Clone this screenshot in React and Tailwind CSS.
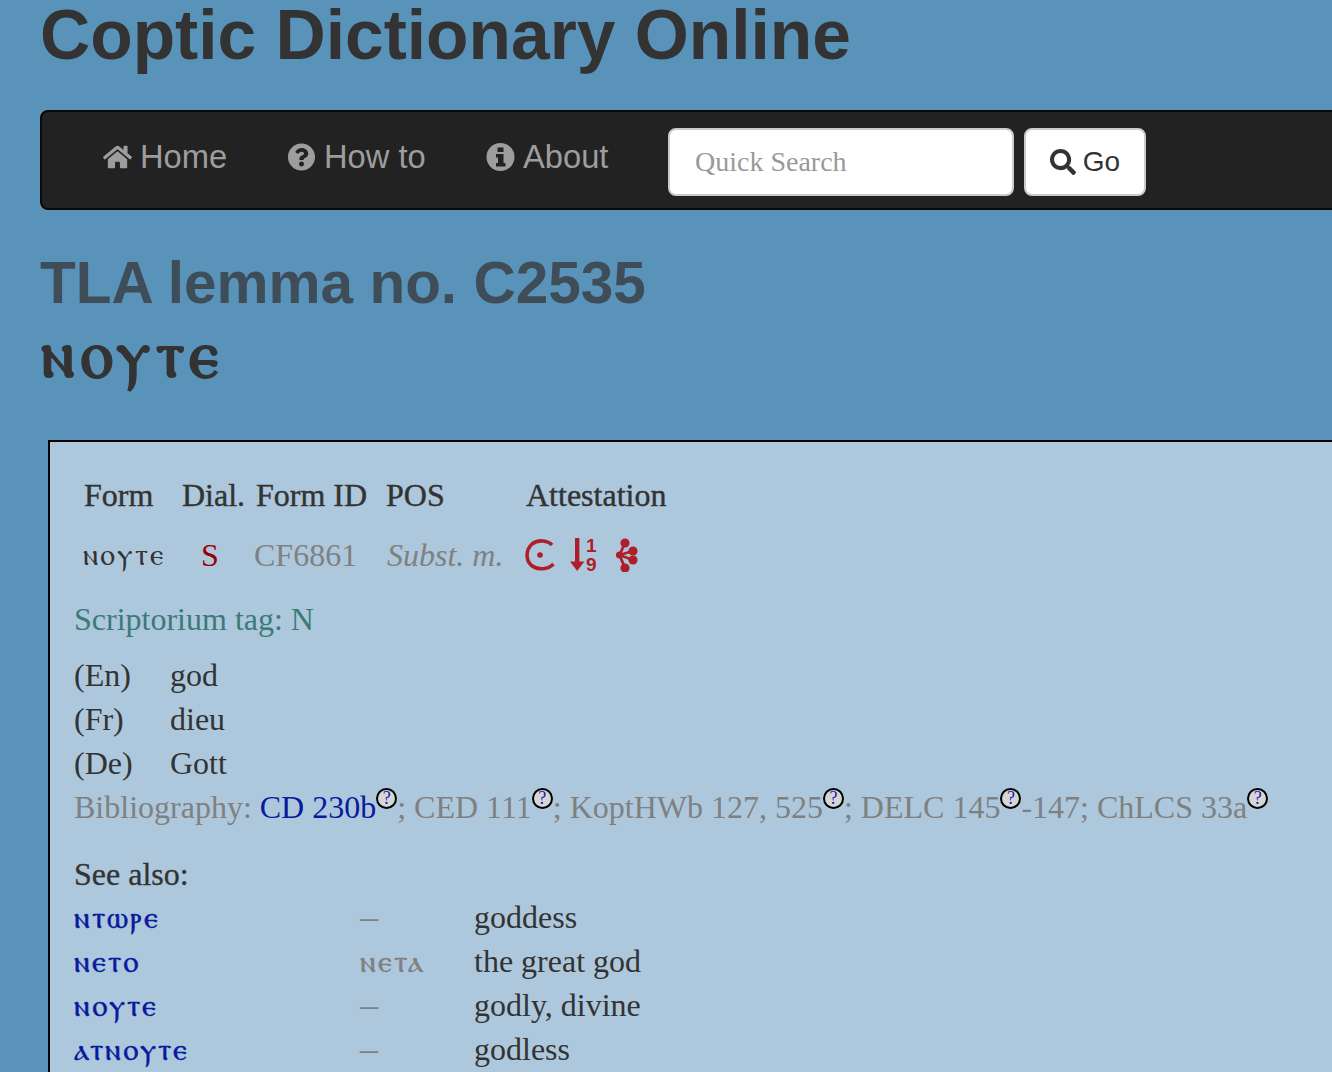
import React from "react";
import { FaHome, FaQuestionCircle, FaSearch } from "react-icons/fa";

const coptic = "font-['DejaVu_Sans','Noto_Sans',sans-serif]";

const Help = () => (
  <span className="relative top-[-14px] inline-flex h-[21px] w-[21px] items-center justify-center rounded-full border-2 border-black bg-[#d6d6d6] align-baseline text-[18px] leading-none text-[#1a1ab4]">
    ?
  </span>
);

const InfoIcon = ({ className }) => (
  <svg viewBox="0 0 28 28" className={className}>
    <circle cx="14" cy="14" r="14" fill="currentColor" />
    <rect x="11" y="4.5" width="6" height="4.5" fill="#222" />
    <path d="M9.5 11h7.5v9h2v3.5H9.5V20h2v-5.5h-2z" fill="#222" />
  </svg>
);

const NavItem = ({ icon: Icon, label, className }) => (
  <a className={`mb-[6px] flex items-center gap-[8px] text-[#9d9d9d] ${className}`}>
    <Icon className="h-[28px] w-[29px]" />
    <span>{label}</span>
  </a>
);

const MoonIcon = () => (
  <svg viewBox="0 0 32 34" className="h-[34px] w-[32px]" fill="none" stroke="#ae1f2b" strokeWidth="3.6">
    <path d="M28 7C24 2.5 14 1 8 6 1.5 12 1.5 22 7.5 27.5c6.5 5 16.5 4 22-1.5" />
    <circle cx="16" cy="17" r="2.8" fill="#ae1f2b" stroke="none" />
  </svg>
);

const ArrowIcon = () => (
  <svg viewBox="0 0 30 36" className="h-[36px] w-[30px] overflow-visible" fill="#ae1f2b">
    <rect x="5" y="1" width="4.4" height="27" />
    <path d="M0 24.5h14.4L7.2 34z" />
    <text x="16" y="15" fontSize="19" fontWeight="700" fontFamily="Liberation Sans, sans-serif">1</text>
    <text x="16" y="34" fontSize="19" fontWeight="700" fontFamily="Liberation Sans, sans-serif">9</text>
  </svg>
);

const BranchIcon = () => (
  <svg viewBox="0 0 24 34" className="ml-[2px] h-[34px] w-[24px]" fill="#ae1f2b" stroke="#ae1f2b">
    <circle cx="9" cy="5" r="4.6" stroke="none" />
    <circle cx="17" cy="13" r="4.6" stroke="none" />
    <circle cx="17" cy="22" r="4.6" stroke="none" />
    <circle cx="9" cy="30" r="4.6" stroke="none" />
    <circle cx="3.5" cy="17" r="3.6" stroke="none" />
    <path d="M3.5 17 9 5M3.5 17 17 13M3.5 17 17 22M3.5 17 9 30" strokeWidth="2.8" fill="none" />
  </svg>
);

const seeAlso = [
  ["ⲛⲧⲱⲣⲉ", "–", "goddess"],
  ["ⲛⲉⲧⲟ", "ⲛⲉⲧⲁ", "the great god"],
  ["ⲛⲟⲩⲧⲉ", "–", "godly, divine"],
  ["ⲁⲧⲛⲟⲩⲧⲉ", "–", "godless"],
];

const glosses = [
  ["(En)", "god"],
  ["(Fr)", "dieu"],
  ["(De)", "Gott"],
];

export default function App() {
  return (
    <div className="h-[1072px] overflow-hidden bg-[#5a93b9] pl-10 font-['Liberation_Sans',Arial,sans-serif]">
      <h1 className="h-[110px] whitespace-nowrap text-[69.5px] font-bold leading-[70px] text-[#333]">
        Coptic Dictionary Online
      </h1>

      <nav className="flex h-[100px] w-[1400px] items-center rounded-lg border-2 border-[#080808] bg-[#222] pl-[61px] text-[32.7px] leading-none">
        <NavItem icon={FaHome} label="Home" className="w-[184px]" />
        <NavItem icon={FaQuestionCircle} label="How to" className="w-[199px]" />
        <NavItem icon={InfoIcon} label="About" className="w-[182px]" />
        <input
          placeholder="Quick Search"
          className="mt-[4px] h-[68px] w-[346px] rounded-lg border-2 border-[#ccc] bg-white px-[25px] font-['Liberation_Serif',serif] text-[28px] text-[#555] placeholder:text-[#999]"
        />
        <button className="ml-[10px] mt-[4px] flex h-[68px] w-[122px] items-center justify-center gap-[7px] rounded-lg border-2 border-[#ccc] bg-white text-[28px] text-[#333]">
          <FaSearch className="h-[26px] w-[26px]" />
          Go
        </button>
      </nav>

      <h2 className="mt-[38px] whitespace-nowrap text-[58.5px] font-bold leading-[70px] text-[#3f4d59]">
        TLA lemma no. C2535
      </h2>
      <div className={`${coptic} ml-px mt-[2px] h-[120px] text-[66px] font-bold leading-[70px] tracking-[5.5px] text-[#333]`}>ⲛⲟⲩⲧⲉ</div>

      <main className="ml-2 h-[700px] w-[1400px] border-2 border-black bg-[#adc8dc] pl-[24px] pt-[31px] font-['Liberation_Serif',serif] text-[32px] leading-[44px] text-[#333]">
        <div className="grid grid-cols-[98px_74px_130px_140px_1fr] pl-[10px] [-webkit-text-stroke:0.4px_#333]">
          <span>Form</span>
          <span>Dial.</span>
          <span>Form ID</span>
          <span>POS</span>
          <span>Attestation</span>
        </div>
        <div className="mt-[16px] grid grid-cols-[118px_53px_133px_137px_1fr] items-center pl-[9px]">
          <span className={`${coptic} text-[30px] tracking-[2px]`}>ⲛⲟⲩⲧⲉ</span>
          <span className="text-[#990000]">S</span>
          <span className="text-[#808080]">CF6861</span>
          <span className="italic text-[#808080]">Subst. m.</span>
          <span className="flex items-center gap-[14px]">
            <MoonIcon />
            <ArrowIcon />
            <BranchIcon />
          </span>
        </div>

        <p className="mt-[20px] text-[#3c7a78]">Scriptorium tag: N</p>

        <div className="mt-[12px]">
          {glosses.map(([lang, word]) => (
            <div key={lang} className="grid grid-cols-[96px_1fr]">
              <span>{lang}</span>
              <span>{word}</span>
            </div>
          ))}
        </div>

        <p className="whitespace-nowrap text-[#808080]">
          Bibliography: <a className="text-[#0a1a9c]">CD 230b</a>
          <Help />; CED 111
          <Help />; KoptHWb 127, 525
          <Help />; DELC 145
          <Help />-147; ChLCS 33a
          <Help />
        </p>

        <p className="mt-[23px] [-webkit-text-stroke:0.3px_#333]">See also:</p>
        <div className="-mt-px">
          {seeAlso.map(([form, variant, gloss]) => (
            <div key={form} className="grid grid-cols-[286px_114px_1fr]">
              <a className={`${coptic} text-[31px] tracking-[2px] text-[#0a1a9c] [-webkit-text-stroke:0.4px_#0a1a9c]`}>{form}</a>
              <span
                className={
                  variant === "–"
                    ? "text-[36px] text-[#808080]"
                    : `${coptic} text-[31px] tracking-[2px] text-[#808080] [-webkit-text-stroke:0.4px_#808080]`
                }
              >
                {variant}
              </span>
              <span>{gloss}</span>
            </div>
          ))}
        </div>
      </main>
    </div>
  );
}
